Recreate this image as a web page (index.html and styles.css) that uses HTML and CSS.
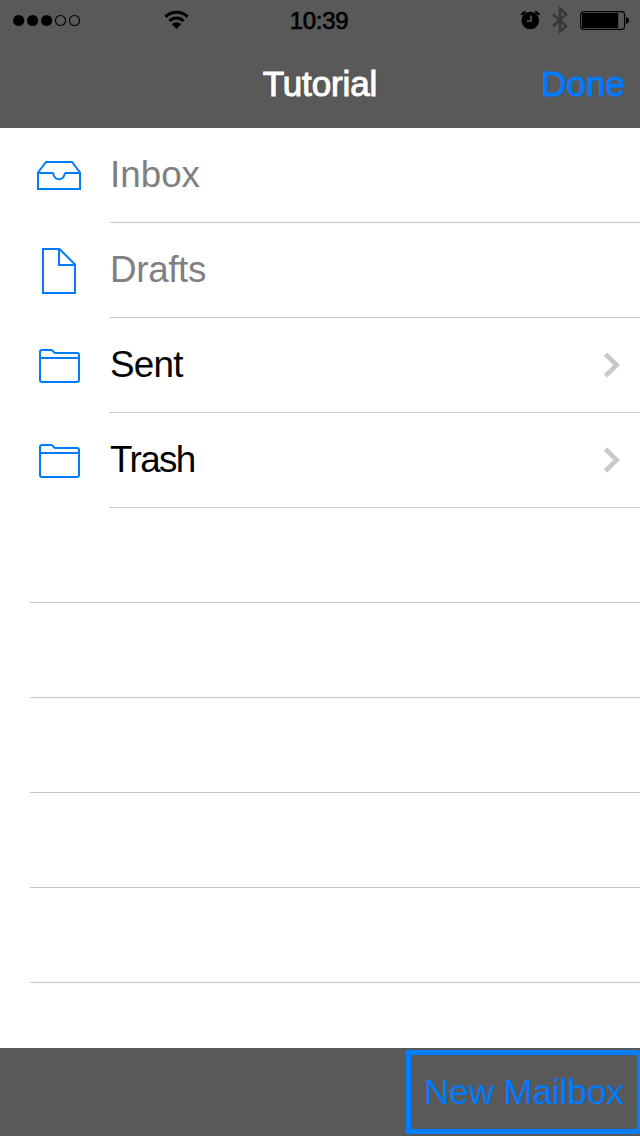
FILE: index.html
```html
<!DOCTYPE html>
<html lang="en">
<head>
<meta charset="utf-8">
<title>Tutorial</title>
<link rel="stylesheet" href="styles.css">
</head>
<body>
<div class="screen">
  <header class="top">
    <div class="status">
      <div class="status-left">
        <svg class="signal" width="70" height="14" viewBox="0 0 70 14">
          <circle cx="6.7" cy="7.500" r="5.6"/><circle cx="20.6" cy="7.500" r="5.6"/><circle cx="34.6" cy="7.500" r="5.6"/>
          <circle class="hollow" cx="48.5" cy="7.500" r="5"/><circle class="hollow" cx="62.500" cy="7.500" r="5"/>
        </svg>
        <svg class="wifi" width="26" height="20" viewBox="0 0 26 20">
          <path class="arc" d="M2.400 6.800a16 16 0 0 1 22.200 0M6.400 11a10 10 0 0 1 14.200 0"/>
          <path d="M13.500 19l-4.700-4.700a6.700 6.700 0 0 1 9.400 0z"/>
        </svg>
      </div>
      <div class="time">10:39</div>
      <div class="status-right">
        <svg width="20" height="20" viewBox="0 0 20 20">
          <circle cx="10.300" cy="10.500" r="8.800"/>
          <path class="bell" d="M1.300 5a12 12 0 0 1 4.200-3.500M15.100 1.500a12 12 0 0 1 4.200 3.500"/>
          <path class="hands" d="M11 5.500v5.500H6.700"/>
        </svg>
        <svg class="bluetooth" width="16" height="28" viewBox="0 0 16 28">
          <path d="M1 8.300l13.200 11.900L8 25.500V2.500l6.200 5.800L1 20.200"/>
        </svg>
        <svg class="battery" width="50" height="20" viewBox="0 0 50 20">
          <rect class="shell" x=".6" y="1.600" width="44" height="17.800" rx="3.200"/>
          <rect x="2" y="3" width="36.200" height="15"/>
          <path d="M46 7.200c4 .5 4 6.100 0 6.600z"/>
        </svg>
      </div>
    </div>
    <div class="nav">
      <h1 class="title">Tutorial</h1>
      <div class="done">Done</div>
    </div>
  </header>
  <main class="list">
    <div class="row muted">
      <div class="icon"><svg width="46" height="50" viewBox="36 150 46 50"><path d="M38 189V172.500L46 162h26l8 10.500V189zM38 173h14.500c1 0 .8 1.500 1.300 2.500c2 5 8.400 5 10.400 0c.5-1 .3-2.500 1.300-2.500H80"/></svg></div>
      <div class="label inbox">Inbox</div>
    </div>
    <div class="row muted">
      <div class="icon"><svg width="46" height="50" viewBox="36 245 46 50"><path d="M43 249h16.500L75 264.500V293H43zM59 249v16h16"/></svg></div>
      <div class="label drafts">Drafts</div>
    </div>
    <div class="row">
      <div class="icon"><svg width="46" height="50" viewBox="36 340 46 50"><path d="M40 352q0-2 2-2h9q1.500 0 2.300 1.500T55.500 353H77q2 0 2 2v25q0 2-2 2H42q-2 0-2-2zM40 358h39"/></svg></div>
      <div class="label sent">Sent</div>
      <svg class="chevron" width="20" height="28" viewBox="0 0 20 28"><path d="M5.500 3.200l11.200 10.800l-11.200 10.800"/></svg>
    </div>
    <div class="row">
      <div class="icon"><svg width="46" height="50" viewBox="36 340 46 50"><path d="M40 352q0-2 2-2h9q1.500 0 2.300 1.500T55.500 353H77q2 0 2 2v25q0 2-2 2H42q-2 0-2-2zM40 358h39"/></svg></div>
      <div class="label trash">Trash</div>
      <svg class="chevron" width="20" height="28" viewBox="0 0 20 28"><path d="M5.500 3.200l11.200 10.800l-11.200 10.800"/></svg>
    </div>
    <div class="row empty"></div>
    <div class="row empty"></div>
    <div class="row empty"></div>
    <div class="row empty"></div>
    <div class="row empty"></div>
  </main>
  <footer class="toolbar">
    <div class="new-mailbox">New Mailbox</div>
  </footer>
</div>
</body>
</html>
```
FILE: styles.css
```css
* { box-sizing: border-box; }
body { margin: 0; background: #fff; font-family: "Liberation Sans", Arial, sans-serif; }
svg { display: block; flex: none; }
.screen { width: 640px; height: 1136px; display: flex; flex-direction: column; overflow: hidden; }
.top { height: 128px; background: #595959; }
.status { height: 40px; display: grid; grid-template-columns: 1fr 62px 1fr; grid-template-rows: 40px; align-items: center; }
.status-left { display: flex; align-items: center; padding-left: 12px; gap: 81px; }
.hollow { fill: none; stroke: #000; stroke-width: 1.1; }
.arc { fill: none; stroke: #000; stroke-width: 3; }
.time { font-size: 24px; line-height: 38px; padding-top: 2px; margin-left: -2px; white-space: nowrap; text-align: center; -webkit-text-stroke: .7px #000; letter-spacing: -.3px; }
.status-right { display: flex; align-items: center; justify-content: flex-end; padding-right: 10px; gap: 12px; }
.bell { fill: none; stroke: #000; stroke-width: 2; }
.hands { fill: none; stroke: #595959; stroke-width: 1.7; }
.bluetooth { fill: none; stroke: #363636; stroke-width: 2.4; }
.shell { fill: none; stroke: #000; stroke-width: 1.2; }
.nav { height: 88px; display: grid; grid-template-columns: 1fr auto 1fr; align-items: center; padding: 0 15px; font-size: 35px; line-height: 88px; }
.title { grid-column: 2; margin: 0; color: #fff; font: inherit; -webkit-text-stroke: 1px #fff; letter-spacing: -.1px; }
.done { color: #007aff; text-align: right; -webkit-text-stroke: 1px #007aff; }
.list { flex: 1; }
.row { height: 95px; display: flex; }
.icon { width: 110px; padding: 22px 0 0 36px; }
.icon path { fill: none; stroke: #007aff; stroke-width: 2; }
.label { flex: 1; font-size: 36.8px; line-height: 94px; height: 95px; border-bottom: 1px solid #c8c7cc; color: #000; }
.muted .label { color: #808080; }
.inbox { letter-spacing: 0; }
.drafts { letter-spacing: -.35px; }
.sent { letter-spacing: -.75px; }
.trash { letter-spacing: -1.6px; }
.chevron { width: 40px; height: 95px; padding: 33px 20px 33px 0; border-bottom: 1px solid #c8c7cc; fill: none; stroke: #c7c7cc; stroke-width: 4.6; }
.empty { margin-left: 30px; border-bottom: 1px solid #c8c7cc; }
.toolbar { height: 88px; background: #595959; display: flex; padding: 2px 0 2px 406px; }
.new-mailbox { flex: none; width: 236px; height: 84px; border: 5px solid #0080ff; padding-left: 13px; color: #007aff; font-size: 35px; line-height: 73px; letter-spacing: -.05px; white-space: nowrap; }
```
